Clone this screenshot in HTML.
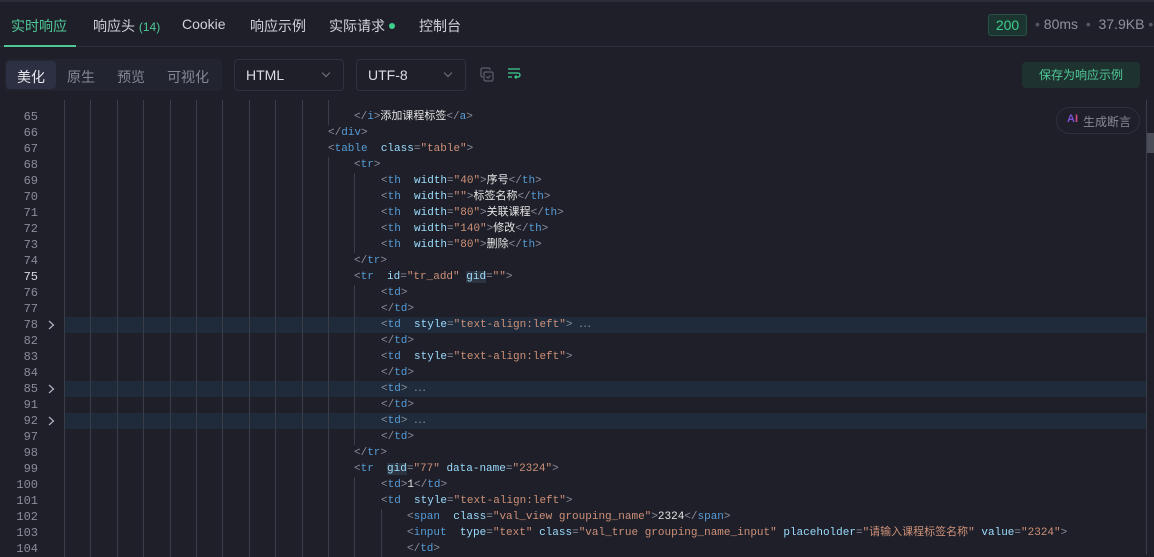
<!DOCTYPE html>
<html><head><meta charset="utf-8"><style>
*{margin:0;padding:0;box-sizing:border-box}
body{width:1154px;height:555px;overflow:hidden;background:#1e1f29;font-family:"Liberation Sans","Noto Sans CJK SC",sans-serif;color:#d4d4d8;position:relative}
.abs{position:absolute}
.tab{position:absolute;top:16px;font-size:14px;color:#d0d2da}
.code{font-family:"Liberation Mono","Noto Sans CJK SC",monospace;font-size:11px;white-space:pre}
.row{position:absolute;left:0;width:1146px;height:16px;line-height:16px}
.ln{position:absolute;left:0;width:38px;text-align:right;color:#8a8d99;font-family:"Liberation Mono",monospace;font-size:12px}
.g{position:absolute;top:0;width:1px;height:16px;background:#3a3c48}
.p{color:#8b8f9a}.t{color:#569cd6}.a{color:#9cdcfe}.s{color:#ce9178}.w{color:#e6e6e6}
.chev{position:absolute;left:48px;top:3px;width:7px;height:10px}
</style></head><body>
<div class="abs" style="left:0;top:0;width:1154px;height:2px;background:#2a2c38"></div>
<div class="tab" style="left:11px;color:#4fc896">实时响应</div>
<div class="tab" style="left:93px">响应头 <span style="color:#4fc896;font-size:12px">(14)</span></div>
<div class="tab" style="left:182px">Cookie</div>
<div class="tab" style="left:250px">响应示例</div>
<div class="tab" style="left:329px">实际请求</div>
<div class="abs" style="left:389px;top:23px;width:6px;height:6px;border-radius:50%;background:#3ecf8e"></div>
<div class="tab" style="left:419px">控制台</div>
<div class="abs" style="left:0;top:46px;width:1154px;height:1px;background:#2b2d39"></div>
<div class="abs" style="left:4px;top:45px;width:72px;height:2px;background:#4fc896"></div>
<div class="abs" style="left:988px;top:14px;width:39px;height:22px;border:1px solid #285446;background:#1c3530;border-radius:3px;color:#3ecf8e;font-size:14px;text-align:center;line-height:20px">200</div>
<div class="abs" style="left:1035px;top:16px;font-size:14px;color:#8e919e"><span style="color:#555866">•</span> 80ms &nbsp;<span style="color:#555866">•</span> &nbsp;37.9KB <span style="color:#555866">•</span></div>

<div class="abs" style="left:5px;top:59px;width:217px;height:32px;background:#22242f;border-radius:4px"></div>
<div class="abs" style="left:6px;top:61px;width:50px;height:28px;background:#2d3042;border-radius:4px"></div>
<div class="abs" style="left:17px;top:67px;font-size:14px;color:#e8e8ee">美化</div>
<div class="abs" style="left:67px;top:67px;font-size:14px;color:#858896">原生</div>
<div class="abs" style="left:117px;top:67px;font-size:14px;color:#858896">预览</div>
<div class="abs" style="left:167px;top:67px;font-size:14px;color:#858896">可视化</div>
<div class="abs" style="left:234px;top:59px;width:110px;height:32px;border:1px solid #2f3140;border-radius:4px"></div>
<div class="abs" style="left:246px;top:67px;font-size:14px;color:#dcdde3">HTML</div>
<div class="abs" style="left:323px;top:70px;width:6px;height:6px;border-right:1px solid #777;border-bottom:1px solid #777;transform:rotate(45deg)"></div>
<div class="abs" style="left:356px;top:59px;width:110px;height:32px;border:1px solid #2f3140;border-radius:4px"></div>
<div class="abs" style="left:368px;top:67px;font-size:14px;color:#dcdde3">UTF-8</div>
<div class="abs" style="left:445px;top:70px;width:6px;height:6px;border-right:1px solid #777;border-bottom:1px solid #777;transform:rotate(45deg)"></div>
<svg class="abs" style="left:479px;top:67px" width="16" height="16" viewBox="0 0 16 16" fill="none" stroke="#5c5f6c" stroke-width="1.2"><rect x="5" y="5" width="9" height="9" rx="1.5"/><path d="M11 3V2.5A1.5 1.5 0 0 0 9.5 1h-6A1.5 1.5 0 0 0 2 2.5v6A1.5 1.5 0 0 0 3.5 10H4"/><path d="M7.5 9.5l1.5 1.5 2.5-2.5"/></svg>
<svg class="abs" style="left:507px;top:67px" width="14" height="14" viewBox="0 0 14 14" fill="none" stroke="#3ecf8e" stroke-width="1.3"><path d="M1 2h12M1 6h10a2 2 0 0 1 0 4H8M9.5 8.5L8 10l1.5 1.5M1 10h4"/></svg>
<div class="abs" style="left:1022px;top:62px;width:118px;height:26px;background:#1e3230;border-radius:4px;color:#4fc896;font-size:12px;text-align:center;line-height:26px">保存为响应示例</div>

<div class="abs" style="left:1056px;top:107px;width:84px;height:27px;border:1px solid #2e303d;border-radius:14px;background:#1e1f29;z-index:5"></div>
<div class="abs" style="left:1067px;top:113px;font-size:11px;font-weight:bold;color:#7a4fd6;z-index:6">A<span style="color:#d04a8a">I</span></div>
<div class="abs" style="left:1083px;top:113px;font-size:12px;color:#858896;z-index:6">生成断言</div>
<div class="abs" style="left:1146px;top:100px;width:1px;height:455px;background:#3a3c48"></div>
<div class="abs" style="left:1147px;top:133px;width:7px;height:20px;background:#4a4c56"></div>

<div class="code" id="c"></div>
<script>
const rows=[
[65,11,'<span class="p">&lt;/</span><span class="t">i</span><span class="p">&gt;</span><span class="w">添加课程标签</span><span class="p">&lt;/</span><span class="t">a</span><span class="p">&gt;</span>'],
[66,10,'<span class="p">&lt;/</span><span class="t">div</span><span class="p">&gt;</span>'],
[67,10,'<span class="p">&lt;</span><span class="t">table</span>  <span class="a">class</span><span class="p">=</span><span class="s">"table"</span><span class="p">&gt;</span>'],
[68,11,'<span class="p">&lt;</span><span class="t">tr</span><span class="p">&gt;</span>'],
[69,12,'<span class="p">&lt;</span><span class="t">th</span>  <span class="a">width</span><span class="p">=</span><span class="s">"40"</span><span class="p">&gt;</span><span class="w">序号</span><span class="p">&lt;/</span><span class="t">th</span><span class="p">&gt;</span>'],
[70,12,'<span class="p">&lt;</span><span class="t">th</span>  <span class="a">width</span><span class="p">=</span><span class="s">""</span><span class="p">&gt;</span><span class="w">标签名称</span><span class="p">&lt;/</span><span class="t">th</span><span class="p">&gt;</span>'],
[71,12,'<span class="p">&lt;</span><span class="t">th</span>  <span class="a">width</span><span class="p">=</span><span class="s">"80"</span><span class="p">&gt;</span><span class="w">关联课程</span><span class="p">&lt;/</span><span class="t">th</span><span class="p">&gt;</span>'],
[72,12,'<span class="p">&lt;</span><span class="t">th</span>  <span class="a">width</span><span class="p">=</span><span class="s">"140"</span><span class="p">&gt;</span><span class="w">修改</span><span class="p">&lt;/</span><span class="t">th</span><span class="p">&gt;</span>'],
[73,12,'<span class="p">&lt;</span><span class="t">th</span>  <span class="a">width</span><span class="p">=</span><span class="s">"80"</span><span class="p">&gt;</span><span class="w">删除</span><span class="p">&lt;/</span><span class="t">th</span><span class="p">&gt;</span>'],
[74,11,'<span class="p">&lt;/</span><span class="t">tr</span><span class="p">&gt;</span>'],
[75,11,'<span class="p">&lt;</span><span class="t">tr</span>  <span class="a">id</span><span class="p">=</span><span class="s">"tr_add"</span> <span class="a" style="background:#2c3440">gid</span><span class="p">=</span><span class="s">""</span><span class="p">&gt;</span>'],
[76,12,'<span class="p">&lt;</span><span class="t">td</span><span class="p">&gt;</span>'],
[77,12,'<span class="p">&lt;/</span><span class="t">td</span><span class="p">&gt;</span>'],
[78,12,'<span class="p">&lt;</span><span class="t">td</span>  <span class="a">style</span><span class="p">=</span><span class="s">"text-align:left"</span><span class="p">&gt;</span><span class="p"> ⋯</span>',1],
[82,12,'<span class="p">&lt;/</span><span class="t">td</span><span class="p">&gt;</span>'],
[83,12,'<span class="p">&lt;</span><span class="t">td</span>  <span class="a">style</span><span class="p">=</span><span class="s">"text-align:left"</span><span class="p">&gt;</span>'],
[84,12,'<span class="p">&lt;/</span><span class="t">td</span><span class="p">&gt;</span>'],
[85,12,'<span class="p">&lt;</span><span class="t">td</span><span class="p">&gt;</span><span class="p"> ⋯</span>',1],
[91,12,'<span class="p">&lt;/</span><span class="t">td</span><span class="p">&gt;</span>'],
[92,12,'<span class="p">&lt;</span><span class="t">td</span><span class="p">&gt;</span><span class="p"> ⋯</span>',1],
[97,12,'<span class="p">&lt;/</span><span class="t">td</span><span class="p">&gt;</span>'],
[98,11,'<span class="p">&lt;/</span><span class="t">tr</span><span class="p">&gt;</span>'],
[99,11,'<span class="p">&lt;</span><span class="t">tr</span>  <span class="a" style="background:#2c3440">gid</span><span class="p">=</span><span class="s">"77"</span> <span class="a">data-name</span><span class="p">=</span><span class="s">"2324"</span><span class="p">&gt;</span>'],
[100,12,'<span class="p">&lt;</span><span class="t">td</span><span class="p">&gt;</span><span class="w">1</span><span class="p">&lt;/</span><span class="t">td</span><span class="p">&gt;</span>'],
[101,12,'<span class="p">&lt;</span><span class="t">td</span>  <span class="a">style</span><span class="p">=</span><span class="s">"text-align:left"</span><span class="p">&gt;</span>'],
[102,13,'<span class="p">&lt;</span><span class="t">span</span>  <span class="a">class</span><span class="p">=</span><span class="s">"val_view grouping_name"</span><span class="p">&gt;</span><span class="w">2324</span><span class="p">&lt;/</span><span class="t">span</span><span class="p">&gt;</span>'],
[103,13,'<span class="p">&lt;</span><span class="t">input</span>  <span class="a">type</span><span class="p">=</span><span class="s">"text"</span> <span class="a">class</span><span class="p">=</span><span class="s">"val_true grouping_name_input"</span> <span class="a">placeholder</span><span class="p">=</span><span class="s">"请输入课程标签名称"</span> <span class="a">value</span><span class="p">=</span><span class="s">"2324"</span><span class="p">&gt;</span>'],
[104,13,'<span class="p">&lt;/</span><span class="t">td</span><span class="p">&gt;</span>']
];
let h='';
for(let k=0;k<11;k++) h+='<div class="g" style="position:absolute;top:100px;height:9px;left:'+Math.round(64+26.4*k)+'px"></div>';
rows.forEach((r,i)=>{
 const top=109+i*16;
 let s='<div class="row" style="top:'+top+'px">';
 if(r[3]) s+='<div style="position:absolute;left:64px;top:0;width:1082px;height:16px;background:#1f2b3b"></div><svg class="chev" viewBox="0 0 7 10"><path d="M1 1l4.5 4-4.5 4" fill="none" stroke="#b0b4c0" stroke-width="1.2"/></svg>';
 s+='<div class="ln" style="'+(r[0]==75?'color:#d8dae0':'')+'">'+r[0]+'</div>';
 for(let k=0;k<r[1];k++) s+='<div class="g" style="left:'+Math.round(64+26.4*k)+'px"></div>';
 s+='<div style="position:absolute;left:'+Math.round(64+26.4*r[1])+'px;top:0">'+r[2]+'</div></div>';
 h+=s;
});
document.getElementById('c').innerHTML=h;
</script>
</body></html>
